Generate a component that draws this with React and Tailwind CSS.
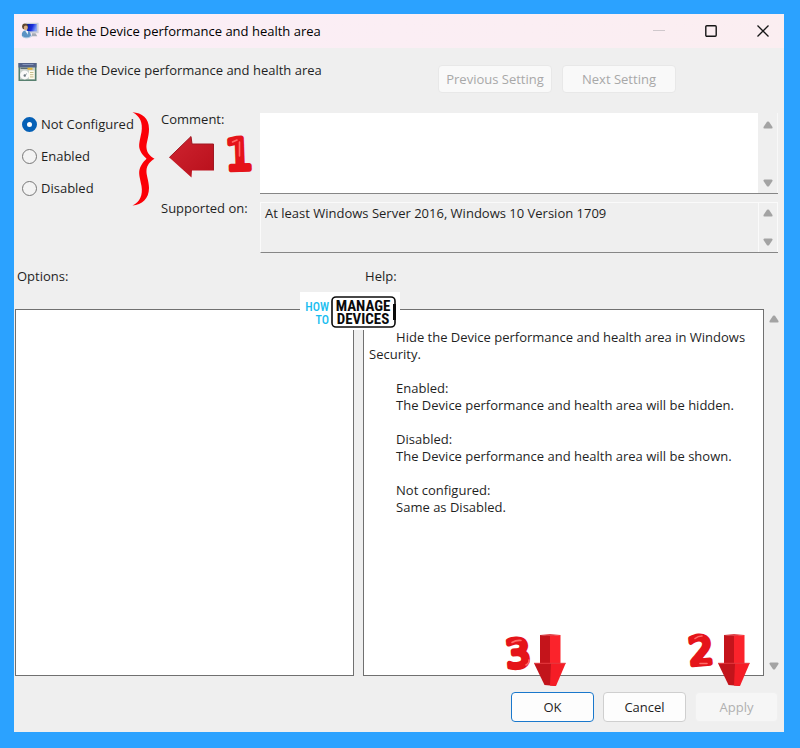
import clsx from "clsx";

const TITLE = "Hide the Device performance and health area";

const STATES = ["Not Configured", "Enabled", "Disabled"];

const HELP = [
  "",
  "Hide the Device performance and health area in Windows Security.",
  "",
  "Enabled:",
  "The Device performance and health area will be hidden.",
  "",
  "Disabled:",
  "The Device performance and health area will be shown.",
  "",
  "Not configured:",
  "Same as Disabled.",
];

function ComputerIcon() {
  return (
    <svg width="18" height="18" viewBox="0 0 18 18" aria-hidden="true">
      <defs>
        <linearGradient id="screen" x1="0" y1="0" x2="1" y2="0.3">
          <stop offset="0" stopColor="#0a1a98" />
          <stop offset="0.6" stopColor="#1c2fdd" />
          <stop offset="1" stopColor="#7f9cf5" />
        </linearGradient>
      </defs>
      <path d="M5 0.8 H17.6 V11.2 H5 Z" fill="#c9ced8" />
      <path d="M6 2 H15.8 V9.4 H6 Z" fill="url(#screen)" />
      <path d="M11 11.2 h3.5 l1.8 3 h-5.6 z" fill="#a4abb6" />
      <circle cx="4" cy="4.4" r="2.9" fill="#5f4630" />
      <ellipse cx="4.8" cy="5.8" rx="2" ry="2.4" fill="#d9ad84" />
      <path d="M0.8 13.5 C0.6 10 2.5 8.4 5 8.6 C8 8.8 9.8 10.8 10 13.5 C8 16.6 2.8 16.6 0.8 13.5 Z" fill="#5b93c4" />
      <path d="M4.2 8.8 L7 9 L6.8 12.8 Z" fill="#eef4fa" />
      <path d="M1 14.2 C3.5 16.4 8 16.4 11 13.8" stroke="#a9c6df" fill="none" />
    </svg>
  );
}

function PolicyIcon() {
  return (
    <svg width="20" height="20" viewBox="0 0 20 20" aria-hidden="true">
      <rect x="0.5" y="1" width="18" height="18" fill="#57806f" />
      <rect x="0.5" y="1" width="18" height="4.5" fill="#53628a" />
      <path d="M4.5 2.5 h11" stroke="#8494bb" />
      <rect x="2" y="5.5" width="15" height="12" fill="#c7cfca" />
      <path d="M2.5 6.3 h9" stroke="#47545c" />
      <rect x="9.5" y="5.8" width="5" height="2" fill="#e3b235" />
      <ellipse cx="6.7" cy="13" rx="4.6" ry="4.4" fill="#f9f9f9" />
      <circle cx="6.8" cy="13.5" r="1.2" fill="#66737a" />
      <path d="M6.8 13.5 L9 11.5" stroke="#9aa5a8" />
      <rect x="11" y="8.5" width="5.5" height="8.5" fill="#fffceb" />
      <path d="M12 10.5 h3.5 M12 12.7 h3.5 M12 14.9 h3.5" stroke="#b5ab74" strokeWidth="0.8" />
    </svg>
  );
}

// Regular weight with a thick round stroke gives the inflated look
function Digit({ value, x, y, size, angle }) {
  return (
    <text
      x={x}
      y={y}
      transform={`rotate(${angle} ${x} ${y})`}
      fontFamily='"DejaVu Sans", sans-serif'
      fontSize={size}
      fill="#e5141a"
      stroke="#e5141a"
      strokeWidth="5"
      strokeLinejoin="round"
    >
      {value}
    </text>
  );
}

const SHINE = {
  1: "M64.5 10 L69 8 M71.5 10 V24",
  2: "M8 8.5 Q11 6 15 6 M13 33.5 H20",
  3: "M9 12.5 Q13 10 18 10.5 M26 30 Q26.5 33 23 35",
};

function Shine({ value }) {
  return (
    <path d={SHINE[value]} fill="none" stroke="#ff6b69" strokeWidth="1.6" strokeLinecap="round" />
  );
}

function DownMarker({ value }) {
  return (
    <svg
      className="absolute bottom-full -left-2 mb-1 overflow-visible pointer-events-none"
      width="64"
      height="58"
      viewBox="0 0 64 58"
    >
      {value === "3" ? (
        <Digit value="3" x={4} y={38} size={38} angle={-5} />
      ) : (
        <Digit value="2" x={3} y={35} size={38} angle={-5} />
      )}
      <Shine value={value} />
      <path d="M37 5 L47 4 L57.5 5 L47 6.5 Z" fill="#e0444a" />
      <path d="M37 5 L47 6 V34 H37 Z" fill="#c4141b" />
      <path d="M47 6 L57.5 5 V34 H47 Z" fill="#fb232b" />
      <path d="M31 33.3 H49 L52.5 56 L41.5 55 Z" fill="#c2141b" />
      <path d="M48 33.3 H62.7 L53 56 L47 55.5 Z" fill="#f51d26" />
      <path d="M31 33.3 H62.7" stroke="#e63a40" />
    </svg>
  );
}

function Brace() {
  return (
    <svg
      className="absolute -top-px left-[118px] pointer-events-none"
      width="24"
      height="94"
      viewBox="0 0 24 94"
      aria-hidden="true"
    >
      <path
        d="M0.5 0.3 C10 1 17 6 17 17 C17 25 14 31 14.5 36 C15 41 18 44 22.5 46.8 C18 49.5 15 53 14.5 58 C14 63 17 69 17 76 C17 87 10 92.5 0.5 93.5 C8 90 11 83 9.5 74 C8 66 6 61 8 56 C10 51 13 48.5 14.5 46.8 C13 45 10 43 8 38 C6 33 8 28 9.5 20 C11 11 8 4 0.5 0.3 Z"
        fill="#fb0007"
      />
    </svg>
  );
}

function LeftMarker() {
  return (
    <svg
      className="absolute top-[19px] left-[154px] overflow-visible pointer-events-none"
      width="90"
      height="46"
      viewBox="0 0 90 46"
    >
      <defs>
        <linearGradient id="arrow" x1="0" y1="0" x2="1" y2="1">
          <stop offset="0" stopColor="#cf2430" />
          <stop offset="1" stopColor="#b80f1b" />
        </linearGradient>
      </defs>
      <path d="M1.3 25.5 L23 4.5 L24 12 H45.5 L46 38.5 H24 L23.5 45.5 Z" fill="url(#arrow)" />
      <path d="M1.3 25.5 L23 4.5 L24 12 H45.5 V38" stroke="#a01822" fill="none" />
      <Digit value="1" x={58} y={38} size={43} angle={-2} />
      <Shine value="1" />
    </svg>
  );
}

function Logo() {
  return (
    <div className="absolute -top-[17px] -left-[63px] h-[38px] w-[100px] bg-white">
      <svg width="100" height="38" viewBox="0 0 100 38">
        <g fontFamily='"Roboto Condensed", Roboto, sans-serif'>
          <g fontSize="12" fontWeight="500" fill="#19bdf0" textAnchor="end">
            <text x="29" y="19">HOW</text>
            <text x="29" y="32">TO</text>
          </g>
          <g fontSize="15" fontWeight="700" fill="#0b0b0b" textAnchor="middle">
            <text x="63" y="19">MANAGE</text>
            <text x="63" y="32">DEVICES</text>
          </g>
        </g>
        <rect x="32" y="5" width="63" height="30" rx="4" fill="none" stroke="#0b0b0b" strokeWidth="1.6" />
        <path d="M94.5 12 V28" stroke="#0b0b0b" strokeWidth="3" />
      </svg>
    </div>
  );
}

function ScrollArrows({ className }) {
  return (
    <div className={clsx("flex w-5 shrink-0 flex-col justify-between", className)}>
      <button type="button" aria-label="Scroll up" className="flex justify-center">
        <svg width="10" height="8" viewBox="0 0 10 8">
          <path d="M4 0.8 Q5 0 6 0.8 L9.5 6 Q10 7.5 8.5 7.5 H1.5 Q0 7.5 0.5 6 Z" fill="#a3a3a3" />
        </svg>
      </button>
      <button type="button" aria-label="Scroll down" className="flex justify-center">
        <svg width="10" height="8" viewBox="0 0 10 8">
          <path d="M4 7.2 Q5 8 6 7.2 L9.5 2 Q10 0.5 8.5 0.5 H1.5 Q0 0.5 0.5 2 Z" fill="#a3a3a3" />
        </svg>
      </button>
    </div>
  );
}

function TitleBar() {
  return (
    <header className="flex h-[34px] items-center bg-gradient-to-r from-[#fbeef7] to-[#fbeef1] pl-[7px]">
      <ComputerIcon />
      <h1 className="ml-1.5 flex-1 text-black">{TITLE}</h1>
      <button type="button" aria-label="Minimize" disabled className="flex w-[52px] justify-center">
        <svg width="12" height="12" viewBox="0 0 12 12">
          <path d="M0 5.5 h12" stroke="#cfc8cc" />
        </svg>
      </button>
      <button type="button" aria-label="Maximize" className="flex w-[52px] justify-center">
        <svg width="12" height="12" viewBox="0 0 12 12">
          <rect x="0.8" y="0.8" width="10.4" height="10.4" rx="1" fill="none" stroke="#161616" strokeWidth="1.4" />
        </svg>
      </button>
      <button type="button" aria-label="Close" className="-mr-[5px] flex w-[52px] justify-center">
        <svg width="12" height="12" viewBox="0 0 12 12">
          <path d="M0.5 0.5 L11.5 11.5 M11.5 0.5 L0.5 11.5" stroke="#161616" strokeWidth="1.3" />
        </svg>
      </button>
    </header>
  );
}

export default function App() {
  return (
    <div className="flex min-h-screen bg-[#2ba2ff] pt-3.5 pr-4 pb-4 pl-3.5 font-['Open_Sans',sans-serif] text-[13px] leading-[17px] text-[#1f1f1f]">
      <main className="flex min-w-0 flex-1 flex-col bg-[#efefef]">
        <TitleBar />

        <div className="flex items-start pt-3.5 pr-[108px] pl-1">
          <PolicyIcon />
          <h2 className="ml-2 flex-1">{TITLE}</h2>
          <div className="mt-[3px] flex gap-2.5 text-[#a8a8a8]">
            <button type="button" disabled className="h-7 w-[114px] rounded border border-[#e8e8e8] bg-[#f9f9f9]">
              Previous Setting
            </button>
            <button type="button" disabled className="h-7 w-[114px] rounded border border-[#e8e8e8] bg-[#f9f9f9]">
              Next Setting
            </button>
          </div>
        </div>

        <section className="relative mt-5 flex pr-1.5">
          <fieldset className="flex w-[147px] shrink-0 flex-col gap-[15px] pt-[3px] pl-2">
            {STATES.map((state, i) => (
              <label key={state} className="flex h-[17px] items-center gap-1">
                <input
                  type="radio"
                  name="state"
                  defaultChecked={i === 0}
                  className="size-[15px] appearance-none rounded-full border border-[#777] bg-[#f3f3f3] checked:border-[5px] checked:border-[#0560b6] checked:bg-white"
                />
                {state}
              </label>
            ))}
          </fieldset>
          <div className="grid flex-1 grid-cols-[99px_1fr] gap-y-2">
            <label htmlFor="comment" className="-mt-0.5">Comment:</label>
            <div className="flex h-[81px] border-b border-[#868686] bg-white">
              <textarea id="comment" className="min-w-0 flex-1 resize-none px-1.5 outline-none" />
              <ScrollArrows className="border-r border-[#f8f8f8] bg-[#efefef] pt-2 pb-1.5" />
            </div>
            <label htmlFor="supported" className="-mt-0.5">Supported on:</label>
            <div className="flex h-[51px] border-t border-l border-b border-t-[#fafafa] border-l-[#fafafa] border-b-[#868686]">
              <textarea
                id="supported"
                readOnly
                defaultValue="At least Windows Server 2016, Windows 10 Version 1709"
                className="min-w-0 flex-1 resize-none overflow-hidden px-1 pt-0.5 outline-none"
              />
              <ScrollArrows className="border-x border-[#fafafa] pt-1.5 pb-1.5" />
            </div>
          </div>
          <Brace />
          <LeftMarker />
        </section>

        <section className="mt-[15px] grid flex-1 grid-cols-[29fr_36fr] gap-x-[9px] pl-px">
          <div className="flex flex-col">
            <h3 className="mb-6 ml-0.5">Options:</h3>
            <div className="flex-1 border border-[#707070] bg-white" />
          </div>
          <div className="flex flex-col">
            <h3 className="mb-6 ml-0.5">Help:</h3>
            <div className="relative flex flex-1">
              <div className="flex-1 border border-[#707070] bg-white px-[5px] pt-0.5">
                {HELP.map((line, i) => (
                  <p key={i} className="min-h-[17px] indent-[27px]">
                    {line}
                  </p>
                ))}
              </div>
              <ScrollArrows className="pt-1.5 pb-1.5" />
              <Logo />
            </div>
          </div>
        </section>

        <footer className="flex justify-end gap-[9px] pt-4 pr-1.5 pb-2.5">
          <div className="relative">
            <button type="button" className="h-[30px] w-[83px] rounded border border-[#1a78cc] bg-[#fdfdfd]">
              OK
            </button>
            <DownMarker value="3" />
          </div>
          <button type="button" className="h-[30px] w-[83px] rounded border border-[#cfcfcf] bg-[#fdfdfd]">
            Cancel
          </button>
          <div className="relative">
            <button type="button" disabled className="h-[30px] w-[83px] rounded border border-[#f0f0f0] bg-[#f6f6f6] text-[#b0b0b0]">
              Apply
            </button>
            <DownMarker value="2" />
          </div>
        </footer>
      </main>
    </div>
  );
}
